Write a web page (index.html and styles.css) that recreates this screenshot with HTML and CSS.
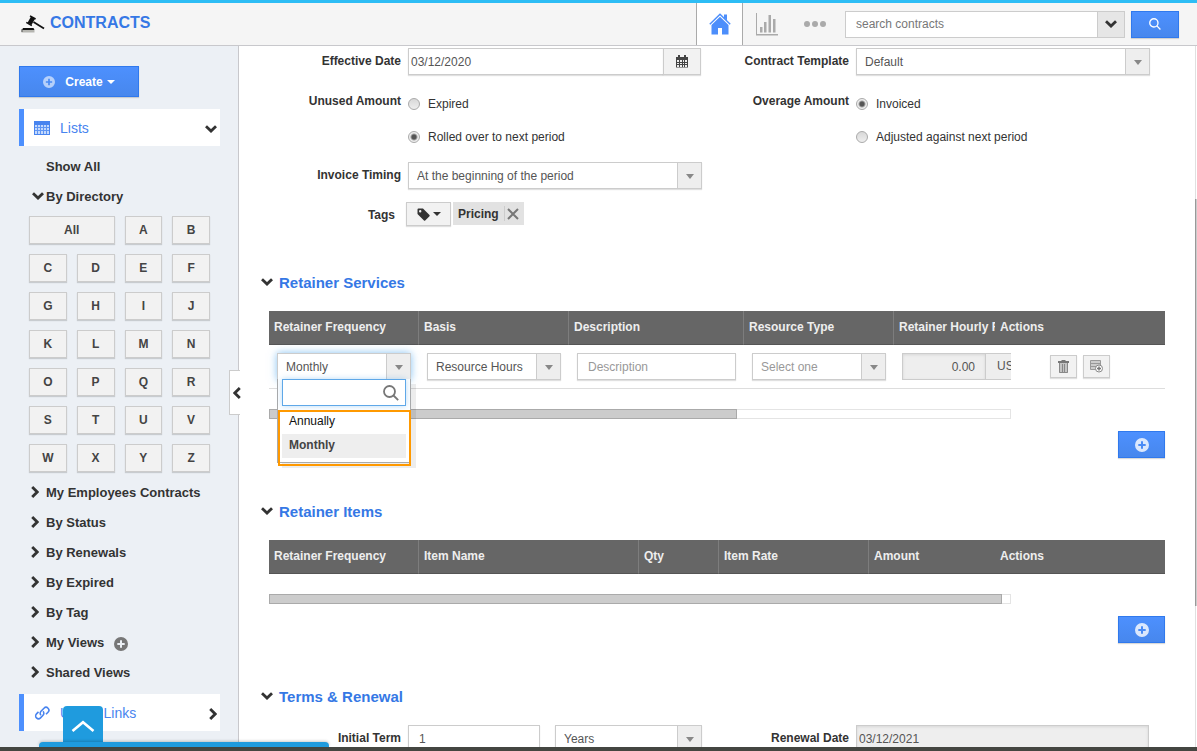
FILE: index.html
```html
<!DOCTYPE html>
<html lang="en">
<head>
    <meta charset="UTF-8">
    <meta name="viewport" content="width=device-width, initial-scale=1.0">
    <title>Contracts</title>
    <link rel="stylesheet" href="styles.css">
</head>
<body>
    <!-- shared icons -->
    <svg class="sprite" aria-hidden="true">
        <symbol id="chevron-down" viewBox="0 0 12 8"><path d="M1 1.2 6 6 11 1.2" fill="none" stroke="currentColor" stroke-width="2.8"/></symbol>
        <symbol id="chevron-right" viewBox="0 0 8 12"><path d="M1.2 1 6.2 6 1.2 11" fill="none" stroke="currentColor" stroke-width="2.8"/></symbol>
        <symbol id="chevron-left" viewBox="0 0 8 12"><path d="M6.8 1 1.8 6 6.8 11" fill="none" stroke="currentColor" stroke-width="2.8"/></symbol>
        <symbol id="plus" viewBox="0 0 14 14"><path fill="currentColor" fill-rule="evenodd" d="M7 0a7 7 0 1 1 0 14A7 7 0 0 1 7 0zM6 3.3V6H3.3v2H6v2.7h2V8h2.700V6H8V3.300z"/></symbol>
        <symbol id="search" viewBox="0 0 16 16"><g fill="none" stroke="currentColor" stroke-width="1.800"><circle cx="6.500" cy="6.500" r="5.500"/><path d="M10.500 10.500 15.200 15.200"/></g></symbol>
    </svg>

    <header class="topbar">
        <a class="brand" href="#">
            <svg width="24" height="20" viewBox="0 0 24 20">
                <path d="M10 3.500 14 5.800 10.500 12 6.500 9.800z" fill="#111"/>
                <path d="M9 2.900 14.600 6M5.300 9.400 10.800 12.600" stroke="#111" stroke-width="1.600"/>
                <path d="M12.500 9 23 15.500" stroke="#111" stroke-width="1.800"/>
                <path d="M2 15h10.500l1 2H1z" fill="#111"/>
                <path d="M.5 17h13v2.500H.5z" fill="#b5b5b0"/>
                <path d="M1 16v3" stroke="#555"/>
            </svg>
            <span>CONTRACTS</span>
        </a>
        <nav class="top-nav">
            <a class="home" href="#" aria-label="Home">
                <svg width="22" height="22" viewBox="0 0 22 22">
                    <path d="M.8 11.200 11 1.200 21.200 11.200" fill="none" stroke="#4c8efb" stroke-width="1.500"/>
                    <path d="M15 1.500h3v6l-3-3z" fill="#4c8efb"/>
                    <path d="M11 3.800 19.500 12v9.500H13V15H9v6.500H2.500V12z" fill="#4c8efb"/>
                </svg>
            </a>
            <a href="#" aria-label="Reports">
                <svg width="22" height="24" viewBox="0 0 22 24" fill="#aaa">
                    <path d="M0 1h1v21h21v1.500H0z"/>
                    <path d="M4 15h2.500v5.500H4zM8 10h2.500v10.500H8zM12.500 3H15v17.500h-2.500zM17 7h2.500v13.500H17z"/>
                </svg>
            </a>
            <a href="#" aria-label="More">
                <svg width="22" height="6" viewBox="0 0 22 6" fill="#aaa"><circle cx="3" cy="3" r="3"/><circle cx="11" cy="3" r="3"/><circle cx="19" cy="3" r="3"/></svg>
            </a>
        </nav>
        <form class="search">
            <input type="text" placeholder="search contracts" aria-label="Search contracts">
            <button type="button" class="search-more" aria-label="Search options"><svg width="12" height="8"><use href="#chevron-down"/></svg></button>
            <button type="button" class="btn-blue search-go" aria-label="Search"><svg width="12" height="12"><use href="#search"/></svg></button>
        </form>
    </header>

    <div class="layout">
        <aside class="sidebar">
            <button type="button" class="btn-blue create"><svg width="12" height="12"><use href="#plus"/></svg><span>Create</span><i class="caret"></i></button>

            <a class="panel" href="#">
                <svg width="16" height="14" viewBox="0 0 16 14">
                    <path d="M0 0h16v14H0z" fill="#4884ef"/>
                    <path d="M1 4h14v9H1z" fill="#c4d9fd"/>
                    <path d="M3.500 4v9M6.500 4v9M9.500 4v9M12.500 4v9M1 6.500h14M1 9.500h14" stroke="#5f95f3"/>
                </svg>
                <span>Lists</span>
                <svg class="toggle" width="12" height="8"><use href="#chevron-down"/></svg>
            </a>

            <ul class="menu">
                <li><a href="#">Show All</a></li>
                <li><a href="#"><svg width="12" height="8"><use href="#chevron-down"/></svg>By Directory</a></li>
            </ul>
            <div class="letters">
                <button type="button" class="all">All</button><button type="button">A</button><button type="button">B</button>
                <button type="button">C</button><button type="button">D</button><button type="button">E</button><button type="button">F</button>
                <button type="button">G</button><button type="button">H</button><button type="button">I</button><button type="button">J</button>
                <button type="button">K</button><button type="button">L</button><button type="button">M</button><button type="button">N</button>
                <button type="button">O</button><button type="button">P</button><button type="button">Q</button><button type="button">R</button>
                <button type="button">S</button><button type="button">T</button><button type="button">U</button><button type="button">V</button>
                <button type="button">W</button><button type="button">X</button><button type="button">Y</button><button type="button">Z</button>
            </div>
            <ul class="menu">
                <li><a href="#"><svg width="8" height="12"><use href="#chevron-right"/></svg>My Employees Contracts</a></li>
                <li><a href="#"><svg width="8" height="12"><use href="#chevron-right"/></svg>By Status</a></li>
                <li><a href="#"><svg width="8" height="12"><use href="#chevron-right"/></svg>By Renewals</a></li>
                <li><a href="#"><svg width="8" height="12"><use href="#chevron-right"/></svg>By Expired</a></li>
                <li><a href="#"><svg width="8" height="12"><use href="#chevron-right"/></svg>By Tag</a></li>
                <li><a href="#"><svg width="8" height="12"><use href="#chevron-right"/></svg>My Views</a><button type="button" class="add-view" aria-label="Add view"><svg width="14" height="14"><use href="#plus"/></svg></button></li>
                <li><a href="#"><svg width="8" height="12"><use href="#chevron-right"/></svg>Shared Views</a></li>
            </ul>

            <a class="panel" href="#">
                <svg width="16" height="16" viewBox="0 0 16 16" fill="none" stroke="#4884ef" stroke-width="1.600">
                    <path d="M7 10.200a2.800 2.800 0 0 1 0-4L10 3.200a2.800 2.800 0 0 1 4 4L12 9.200"/>
                    <path d="M9 6.200a2.800 2.800 0 0 1 0 4L6.500 12.900a2.800 2.800 0 0 1-4-4L4.500 6.900"/>
                </svg>
                <span>Useful Links</span>
                <svg class="toggle" width="8" height="12"><use href="#chevron-right"/></svg>
            </a>
            <button type="button" class="collapse" aria-label="Collapse sidebar"><svg width="8" height="12"><use href="#chevron-left"/></svg></button>
        </aside>

        <main class="content">
            <div class="form-row">
                <label for="effectiveDate">Effective Date</label>
                <div class="date">
                    <input type="text" id="effectiveDate" value="03/12/2020">
                    <button type="button" aria-label="Pick a date">
                        <svg width="12" height="13" viewBox="0 0 12 13">
                            <path d="M0 2h12v10.500H0z" fill="#444"/>
                            <path d="M2 0h2v3H2zM8 0h2v3H8z" fill="#444"/>
                            <path d="M1 5h2v2H1zM4 5h2v2H4zM7 5h1v2H7zM9 5h2v2H9zM1 8h2v1H1zM4 8h2v1H4zM7 8h1v1H7zM9 8h2v1H9zM1 10h2v2H1zM4 10h2v2H4zM7 10h1v2H7zM9 10h2v2H9z" fill="#eee"/>
                        </svg>
                    </button>
                </div>
                <label for="template">Contract Template</label>
                <div class="select"><select id="template"><option>Default</option></select></div>
            </div>

            <div class="form-row radio-row">
                <span class="label">Unused Amount</span>
                <div class="radios">
                    <label><input type="radio" name="unused">Expired</label>
                    <label><input type="radio" name="unused" checked>Rolled over to next period</label>
                </div>
                <span class="label">Overage Amount</span>
                <div class="radios">
                    <label><input type="radio" name="overage" checked>Invoiced</label>
                    <label><input type="radio" name="overage">Adjusted against next period</label>
                </div>
            </div>

            <div class="form-row">
                <label for="timing">Invoice Timing</label>
                <div class="select"><select id="timing"><option>At the beginning of the period</option></select></div>
            </div>

            <div class="form-row tag-row">
                <span class="label">Tags</span>
                <div class="tags">
                    <button type="button" class="tag-btn" aria-label="Add tag">
                        <svg width="13" height="13" viewBox="0 0 13 13"><path fill="#333" fill-rule="evenodd" d="M1.500.5H6l6.500 6.500a1 1 0 0 1 0 1.200l-4.300 4.300a1 1 0 0 1-1.200 0L.5 6V1.500a1 1 0 0 1 1-1zM3.200 2a1.200 1.200 0 1 0 0 2.400 1.200 1.200 0 0 0 0-2.400z"/></svg>
                        <i class="caret"></i>
                    </button>
                    <span class="tag">Pricing<button type="button" aria-label="Remove tag"><svg width="12" height="12" viewBox="0 0 12 12"><path d="M1 1 11 11M11 1 1 11" stroke="#777" stroke-width="2"/></svg></button></span>
                </div>
            </div>

            <section class="block">
                <h2><svg width="12" height="8"><use href="#chevron-down"/></svg>Retainer Services</h2>
                <table class="grid">
                    <colgroup><col class="w150"><col class="w150"><col class="w175"><col class="w150"><col class="w101"><col></colgroup>
                    <thead>
                        <tr><th>Retainer Frequency</th><th>Basis</th><th>Description</th><th>Resource Type</th><th class="last">Retainer Hourly Rate</th><th>Actions</th></tr>
                    </thead>
                    <tbody>
                        <tr>
                            <td>
                                <div class="select open">
                                    <select aria-label="Retainer Frequency"><option>Monthly</option></select>
                                    <div class="dropdown">
                                        <div class="dropdown-search">
                                            <input type="text" aria-label="Filter options">
                                            <svg width="16" height="16"><use href="#search"/></svg>
                                        </div>
                                        <ul>
                                            <li>Annually</li>
                                            <li class="selected">Monthly</li>
                                        </ul>
                                        <div class="highlight"></div>
                                    </div>
                                </div>
                            </td>
                            <td><div class="select"><select aria-label="Basis"><option>Resource Hours</option></select></div></td>
                            <td><input type="text" class="text" placeholder="Description" aria-label="Description"></td>
                            <td><div class="select empty"><select aria-label="Resource Type"><option>Select one</option></select></div></td>
                            <td>
                                <div class="rate">
                                    <input type="text" value="0.00" aria-label="Retainer Hourly Rate" readonly>
                                    <span>USD</span>
                                </div>
                            </td>
                            <td>
                                <div class="actions">
                                    <button type="button" aria-label="Delete">
                                        <svg width="11" height="13" viewBox="0 0 11 13"><path d="M3.500 0h4v1H11v2H0V1h3.500z" fill="#777"/><path d="M1 3h9v10H1z" fill="#c4c4c4"/><path d="M1.500 3v9.500h8V3M4.500 4v8M6.500 4v8" fill="none" stroke="#888"/></svg>
                                    </button>
                                    <button type="button" aria-label="Add row">
                                        <svg width="13" height="13" viewBox="0 0 13 13"><path d="M.5.5h10v9H.5z" fill="#ccc" stroke="#999"/><path d="M0 3.500h10M0 6.500h8" stroke="#999"/><circle cx="9" cy="8.500" r="3.500" fill="#fff" stroke="#888"/><path d="M9 6.500v4M7 8.500h4" stroke="#777" stroke-width="1.500"/></svg>
                                    </button>
                                </div>
                            </td>
                        </tr>
                    </tbody>
                </table>
                <div class="hscroll"><div class="thumb" style="width: 63.3%"></div></div>
                <button type="button" class="btn-blue add" aria-label="Add retainer service"><svg width="14" height="14"><use href="#plus"/></svg></button>
            </section>

            <section class="block">
                <h2><svg width="12" height="8"><use href="#chevron-down"/></svg>Retainer Items</h2>
                <table class="grid">
                    <colgroup><col class="w150"><col class="w220"><col class="w80"><col class="w150"><col class="w126"><col></colgroup>
                    <thead>
                        <tr><th>Retainer Frequency</th><th>Item Name</th><th>Qty</th><th>Item Rate</th><th class="last">Amount</th><th>Actions</th></tr>
                    </thead>
                </table>
                <div class="hscroll"><div class="thumb" style="width: 99.1%"></div></div>
                <button type="button" class="btn-blue add" aria-label="Add retainer item"><svg width="14" height="14"><use href="#plus"/></svg></button>
            </section>

            <section class="block">
                <h2><svg width="12" height="8"><use href="#chevron-down"/></svg>Terms &amp; Renewal</h2>
                <div class="form-row">
                    <label for="term">Initial Term</label>
                    <div class="term">
                        <input type="text" class="text" id="term" value="1">
                        <div class="select"><select aria-label="Term unit"><option>Years</option></select></div>
                    </div>
                    <label for="renewal">Renewal Date</label>
                    <input type="text" class="text readonly" id="renewal" value="03/12/2021" readonly>
                </div>
            </section>
        </main>
        <div class="vscroll"><div class="thumb"></div></div>
    </div>

    <div class="dock">
        <button type="button" aria-label="Open panel"><svg width="24" height="12" viewBox="0 0 24 12"><path d="M1.500 11 12 2.200 22.500 11" fill="none" stroke="#fff" stroke-width="2.600"/></svg></button>
        <div class="dock-bar"></div>
    </div>
    <footer class="bottom"></footer>
</body>
</html>
```
FILE: styles.css
```css
* {
    box-sizing: border-box;
}

body {
    display: flex;
    flex-direction: column;
    position: relative;
    height: 100vh;
    margin: 0;
    overflow: hidden;
    border-top: 3px solid #2dbdf5;
    font-family: "Liberation Sans", Arial, sans-serif;
    font-size: 12px;
    color: #333;
    background-color: #fff;
}

.sprite {
    display: none;
}

svg {
    display: block;
    flex: none;
}

a {
    color: inherit;
    text-decoration: none;
}

ul {
    list-style: none;
    margin: 0;
    padding: 0;
}

input, select, button {
    margin: 0;
    font-family: inherit;
    font-size: 12px;
    border-radius: 0;
    outline: none;
}

button {
    display: flex;
    align-items: center;
    justify-content: center;
    padding: 0;
    color: #333;
    background-color: #f2f2f2;
    border: 1px solid #ccc;
    cursor: pointer;
}

.caret {
    border: 4px solid transparent;
    border-top-color: currentColor;
    border-bottom: 0;
}

.btn-blue {
    color: #fff;
    background: linear-gradient(#4d90fe, #4787ed);
    border-color: #3079ed;
    box-shadow: 0 1px 1px rgba(0,0,0,0.15);
}

/* top bar */
.topbar {
    display: flex;
    flex: none;
    align-items: center;
    height: 43px;
    padding-right: 18px;
    background-color: #f5f5f5;
    border-bottom: 1px solid #c8c8cc;
}

.brand {
    display: flex;
    flex: 1;
    align-items: center;
    gap: 5px;
    padding: 0 0 2px 21px;
    font-size: 16px;
    font-weight: bold;
    color: #3578e5;
}

.top-nav {
    display: flex;
    align-self: stretch;
}

.top-nav a {
    display: flex;
    align-items: center;
    justify-content: center;
    width: 48px;
}

.top-nav .home {
    width: 47px;
    background-color: #fff;
    border: solid #aaa;
    border-width: 0 1px;
}

.search {
    display: flex;
    margin-left: 6px;
}

.search input {
    width: 252px;
    height: 27px;
    padding: 0 10px;
    border: 1px solid #ccc;
    border-right: 0;
    color: #555;
}

.search input::placeholder {
    color: #777;
}

.search-more {
    width: 28px;
    background-color: #e6e6e6;
}

.search-go {
    width: 48px;
    margin-left: 6px;
}

.layout {
    display: flex;
    flex: 1;
    min-height: 0;
}

/* sidebar */
.sidebar {
    position: relative;
    flex: none;
    width: 239px;
    padding: 20px 18px 0 19px;
    background-color: #ecf0f5;
    border-right: 1px solid #c8c8cc;
}

.create {
    width: 120px;
    height: 31px;
    gap: 10px;
    font-weight: bold;
}

.create svg {
    opacity: 0.6;
}

.create .caret {
    margin-left: -6px;
}

.panel {
    display: flex;
    align-items: center;
    gap: 10px;
    height: 37px;
    margin: 12px 0 6px;
    padding: 0 3px 0 10px;
    font-size: 14px;
    color: #4884ef;
    background-color: #fff;
    border-left: 5px solid #4d90fe;
}

.menu + .panel {
    margin-top: 6px;
}

.panel .toggle {
    margin: 3px 0 0 auto;
    color: #333;
}

.menu li {
    display: flex;
    align-items: center;
    height: 30px;
    padding: 0 0 2px 27px;
    font-size: 13px;
    font-weight: bold;
}

.menu a {
    display: flex;
    align-items: center;
}

/* the arrow hangs in the indent */
.menu a svg[height="8"] {
    margin: 0 2px 0 -14px;
}

.menu a svg[width="8"] {
    margin: 0 7px 0 -15px;
}

.add-view {
    margin: 3px 0 0 10px;
    color: #777;
    background: none;
    border: 0;
}

.letters {
    display: grid;
    grid-template-columns: repeat(4, 1fr);
    gap: 10px;
    margin: 4px 10px 6px;
}

.letters button {
    height: 28px;
    font-weight: bold;
    color: #444;
    box-shadow: 0 1px 1px rgba(0,0,0,0.15);
}

.letters .all {
    grid-column: span 2;
}

.collapse {
    position: absolute;
    top: 324px;
    right: -2px;
    width: 11px;
    height: 45px;
    padding-left: 3px;
    background-color: #fff;
    border-right: 0;
}

/* form */
.content {
    flex: 1;
    min-width: 0;
    overflow: hidden;
    padding-top: 2px;
}

.form-row {
    display: grid;
    grid-template-columns: 163px 1fr 142px 1fr;
    column-gap: 6px;
    margin: 0 45px 12px 0;
}

.form-row > label,
.label {
    padding-right: 1px;
    line-height: 27px;
    text-align: right;
    font-weight: bold;
}

.form-row.radio-row {
    margin-top: 15px;
}

.radio-row .label {
    line-height: 22px;
}

.radios {
    display: flex;
    flex-direction: column;
    gap: 6px;
}

.radios label {
    display: flex;
    align-items: center;
    gap: 8px;
    height: 27px;
}

.radios input {
    appearance: none;
    width: 12px;
    height: 12px;
    border: 1px solid #aaa;
    border-radius: 50%;
    background: linear-gradient(#d8d8d8, #eee);
}

.radios input:checked {
    background: radial-gradient(circle, #555 0 2px, #eee 4px);
}

.text,
.date input,
.rate input,
.dropdown input,
select {
    width: 100%;
    height: 27px;
    padding: 0 10px;
    color: #555;
    background-color: #fff;
    border: 1px solid #ccc;
    box-shadow: 0 1px 1px rgba(0,0,0,0.12);
}

.text::placeholder {
    color: #999;
}

.date {
    display: flex;
    margin-right: 1px;
}

.date input {
    padding: 0 2px;
    border-right: 0;
}

.date button {
    flex: none;
    width: 38px;
    box-shadow: 0 1px 1px rgba(0,0,0,0.12);
}

.select {
    position: relative;
    width: 100%;
}

select {
    appearance: none;
    display: block;
    padding: 0 28px 0 8px;
    background: linear-gradient(#ccc, #ccc) right 23px top / 1px 100% no-repeat,
        linear-gradient(#eee, #eee) right / 23px 100% no-repeat #fff;
}

.select::after {
    content: "";
    position: absolute;
    top: 12px;
    right: 8px;
    border: 4px solid transparent;
    border-top: 5px solid #888;
    border-bottom: 0;
    pointer-events: none;
}

.select.empty select {
    color: #999;
}

.term {
    display: grid;
    grid-template-columns: 132fr 147fr;
    gap: 15px;
}

.text.readonly {
    width: calc(100% - 1px);
    padding: 0 2px;
    background-color: #eee;
    box-shadow: inset 0 1px 3px rgba(0,0,0,0.1);
}

.form-row.tag-row {
    margin: 13px 0 0;
}

.tag-row .label {
    padding-right: 7px;
}

.tags {
    display: flex;
    gap: 2px;
    margin-left: -2px;
}

.tag-btn {
    gap: 3px;
    width: 45px;
    height: 24px;
    box-shadow: 0 1px 1px rgba(0,0,0,0.12);
}

.tag {
    display: flex;
    align-items: center;
    gap: 5px;
    height: 23px;
    padding: 0 5px;
    font-weight: bold;
    background-color: #e2e2e2;
}

.tag button {
    height: 15px;
    padding-left: 2px;
    background: none;
    border-width: 0 0 0 1px;
}

/* blocks with tables */
.block {
    margin-bottom: 44px;
}

.tag-row + .block {
    margin-top: 44px;
}

h2 {
    display: flex;
    align-items: center;
    gap: 6px;
    height: 20px;
    margin: 0 0 18px 22px;
    padding-bottom: 2px;
    font-size: 15px;
    color: #3578e5;
}

h2 svg {
    color: #333;
}

.grid {
    width: calc(100% - 60px);
    margin-left: 30px;
    table-layout: fixed;
    border-collapse: separate;
    border-spacing: 0;
}

.w80 { width: 80px; }
.w101 { width: 101px; }
.w126 { width: 126px; }
.w150 { width: 150px; }
.w175 { width: 175px; }
.w220 { width: 220px; }

.grid th {
    height: 34px;
    padding: 0 0 2px 5px;
    overflow: hidden;
    white-space: nowrap;
    text-align: left;
    color: #eee;
    background-color: #666;
    border-right: 1px solid #7d7d7d;
    border-bottom: 1px solid #555;
}

.grid th.last,
.grid th:last-child {
    border-right: 0;
}

.grid td {
    padding: 8px;
    border-bottom: 1px solid #ddd;
}

.rate {
    display: flex;
    width: 109px;
    overflow: hidden;
}

.rate input {
    flex: none;
    width: 83px;
    text-align: right;
    background-color: #eee;
    border-right: 0;
    box-shadow: inset 0 1px 3px rgba(0,0,0,0.1);
}

.rate span {
    flex: none;
    width: 50px;
    height: 27px;
    padding-left: 11px;
    line-height: 24px;
    color: #555;
    background-color: #eee;
    border: 1px solid #ccc;
}

.actions {
    display: flex;
    gap: 6px;
    margin-left: 47px;
}

.actions button {
    width: 27px;
    height: 23px;
    box-shadow: 0 1px 1px rgba(0,0,0,0.12);
}

.hscroll {
    width: calc(100% - 214px);
    height: 10px;
    margin: 20px 0 12px 30px;
    border: 1px solid #e4e4e4;
}

.hscroll .thumb {
    height: 10px;
    margin: -1px;
    background-color: #ccc;
    border: 1px solid #aaa;
}

.add {
    width: 47px;
    height: 27px;
    margin: 0 30px 0 auto;
}

.add svg {
    opacity: 0.8;
}

/* open dropdown */
.open select {
    box-shadow: 0 0 8px rgba(82,168,236,0.7);
}

.dropdown {
    position: absolute;
    z-index: 2;
    top: 26px;
    left: 0;
    right: 0;
    padding: 0 4px 4px;
    background-color: #fff;
    border: 1px solid #aaa;
    border-top: 0;
    box-shadow: 5px 5px 0 rgba(0,0,0,0.07);
}

.dropdown-search {
    position: relative;
}

.dropdown input {
    display: block;
    padding: 0 26px 0 6px;
    border-color: #5fa8e8;
    box-shadow: 0 0 6px rgba(82,168,236,0.4);
}

.dropdown-search svg {
    position: absolute;
    top: 6px;
    right: 7px;
    color: #777;
}

.dropdown ul {
    margin-top: 4px;
}

.dropdown li {
    height: 24px;
    padding-left: 7px;
    line-height: 22px;
    color: #111;
}

.dropdown .selected {
    font-weight: bold;
    color: #444;
    background-color: #eee;
}

.highlight {
    position: absolute;
    top: 31px;
    left: 0;
    right: -1px;
    bottom: -4px;
    border: 2px solid #f90;
}

/* page scrollbar */
.vscroll {
    flex: none;
    width: 2px;
    border-left: 1px solid #e0e0e0;
}

.vscroll .thumb {
    width: 2px;
    height: 58%;
    margin: 153px 0 0 -1px;
    background-color: #ccc;
    border-left: 1px solid #999;
}

/* dock at the bottom */
.dock {
    position: absolute;
    left: 39px;
    bottom: 4px;
    width: 290px;
}

.dock button {
    width: 40px;
    height: 36px;
    margin-left: 24px;
    padding-top: 4px;
    background-color: #1f9bde;
    border: 0;
    border-radius: 4px 4px 0 0;
}

.dock-bar {
    height: 5px;
    background-color: #1f9bde;
    border-radius: 4px 4px 0 0;
    box-shadow: 0 -1px 3px rgba(0,0,0,0.2);
}

.bottom {
    flex: none;
    height: 4px;
    background-color: #444641;
}
```
